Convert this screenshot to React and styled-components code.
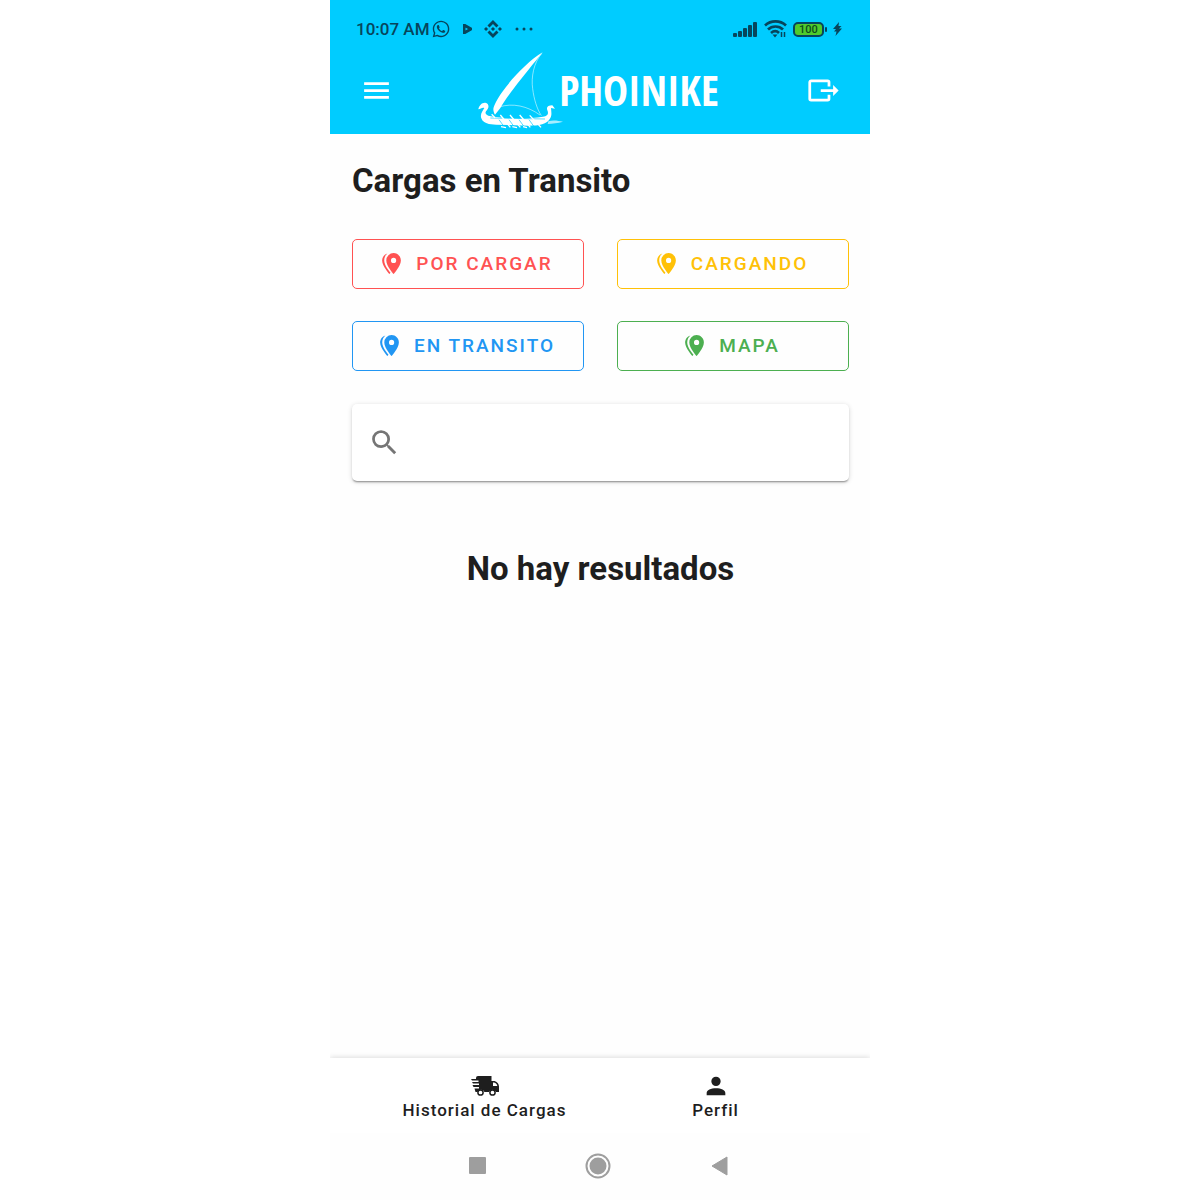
import React from "react";
import styled, { createGlobalStyle } from "styled-components";

const GlobalStyle = createGlobalStyle`
  *, *::before, *::after { box-sizing: border-box; }
  body {
    margin: 0;
    background: #ffffff;
    color: #1e1e1e;
    font-family: Roboto, "Liberation Sans", sans-serif;
  }
  button, input { font: inherit; }
`;

const Screen = styled.div`
  display: flex;
  flex-direction: column;
  width: 100%;
  max-width: 540px;
  min-height: 100vh;
  margin: 0 auto;
  background: #fefefe;
`;

const StatusBar = styled.div`
  display: flex;
  align-items: center;
  justify-content: space-between;
  height: 46px;
  padding: 12px 28px 0 26px;
  background: #00ccff;
  color: #07455c;
`;

const StatusGroup = styled.div`
  display: flex;
  align-items: center;
  gap: ${(p) => p.$gap}px;
`;

const Clock = styled.span`
  font-size: 17px;
  line-height: 20px;
  font-weight: 500;
`;

const Battery = styled.span`
  display: flex;
  align-items: center;
  justify-content: center;
  width: 31px;
  height: 15px;
  border: 2px solid #07455c;
  border-radius: 5px;
  background: #4fcb2c;
  color: #0c4a1c;
  font-size: 11px;
  line-height: 11px;
  font-weight: 500;
`;

const BatteryWrap = styled.span`
  display: flex;
  align-items: center;
  gap: 1px;
  &::after {
    content: "";
    width: 2px;
    height: 5px;
    border-radius: 1px;
    background: #07455c;
  }
`;

const AppBar = styled.header`
  display: flex;
  align-items: center;
  justify-content: space-between;
  height: 88px;
  padding: 0 30px;
  background: #00ccff;
  color: #ffffff;
`;

const IconButton = styled.button`
  display: flex;
  padding: 0;
  border: 0;
  background: none;
  color: inherit;
  cursor: pointer;
`;

const Brand = styled.a`
  display: flex;
  align-items: center;
  padding-right: 4px;
  color: inherit;
  text-decoration: none;
`;

const BrandName = styled.span`
  font-family: "Noto Sans Condensed", "Open Sans Condensed", "Open Sans", sans-serif;
  font-size: 42px;
  line-height: 48px;
  font-weight: 700;
`;

const Ship = styled.svg`
  width: 82px;
  height: 78px;
  overflow: visible;
`;

const Content = styled.main`
  flex: 1;
  display: flex;
  flex-direction: column;
  padding: 25px 21px 0 22px;
`;

const Title = styled.h1`
  margin: 0;
  font-size: 33px;
  line-height: 44px;
  font-weight: 700;
  text-align: ${(p) => (p.$center ? "center" : "left")};
`;

const Filters = styled.div`
  display: grid;
  grid-template-columns: 1fr 1fr;
  gap: 32px 33px;
  margin: 36px 0 33px;
`;

const FilterButton = styled.button`
  display: flex;
  align-items: center;
  justify-content: center;
  gap: 12px;
  height: 50px;
  padding: 0 4px 1px 0;
  border: 1px solid currentColor;
  border-radius: 5px;
  background: transparent;
  color: ${(p) => p.$color};
  font-size: 19px;
  line-height: 24px;
  font-weight: 500;
  letter-spacing: 2px;
  cursor: pointer;
`;

const SearchBox = styled.label`
  display: flex;
  align-items: center;
  gap: 12px;
  height: 77px;
  margin-bottom: 66px;
  padding: 0 16px;
  border-radius: 5px;
  background: #ffffff;
  color: #757575;
  box-shadow: 0 2px 2px -1px rgba(0, 0, 0, 0.4), 0 1px 5px rgba(0, 0, 0, 0.16);
`;

const SearchInput = styled.input`
  flex: 1;
  min-width: 0;
  height: 44px;
  padding: 0;
  border: 0;
  outline: none;
  background: transparent;
  color: #1e1e1e;
  font-size: 22px;
`;

const BottomNav = styled.nav`
  display: flex;
  justify-content: center;
  height: 75px;
  background: #ffffff;
  box-shadow: 0 -1px 5px rgba(0, 0, 0, 0.13);
  clip-path: inset(-8px 0 0 0);
`;

const NavLink = styled.a`
  flex: 0 1 231px;
  display: flex;
  flex-direction: column;
  align-items: center;
  justify-content: center;
  padding-top: 2px;
  color: #1e1e1e;
  font-size: 17px;
  line-height: 21px;
  font-weight: 500;
  letter-spacing: 1px;
  text-decoration: none;
`;

const SystemNav = styled.div`
  display: grid;
  grid-template-columns: repeat(3, 121px);
  justify-content: center;
  justify-items: center;
  align-items: center;
  height: 67px;
  padding: 0 4px 2px 0;
  color: #9e9e9e;
`;

function Icon({ size = 24, d, children }) {
  return (
    <svg width={size} height={size} viewBox="0 0 24 24" fill="currentColor" aria-hidden="true">
      {d ? <path d={d} /> : children}
    </svg>
  );
}

const paths = {
  menu: "M3 6h18v2H3V6m0 5h18v2H3v-2m0 5h18v2H3v-2z",
  exit: "M23,12L19,8V11H10V13H19V16M1,18V6C1,4.89 1.9,4 3,4H15A2,2 0 0,1 17,6V9H15V6H3V18H15V15H17V18A2,2 0 0,1 15,20H3A2,2 0 0,1 1,18Z",
  markers:
    "M14,11.5A2.5,2.5 0 0,0 16.5,9A2.5,2.5 0 0,0 14,6.5A2.5,2.5 0 0,0 11.5,9A2.5,2.5 0 0,0 14,11.5M14,2C17.86,2 21,5.13 21,9C21,14.25 14,22 14,22C14,22 7,14.25 7,9A7,7 0 0,1 14,2M5,9C5,13.5 10.08,19.66 11,20.81L10,22C10,22 3,14.25 3,9C3,5.83 5.11,3.15 8,2.29C6.16,3.94 5,6.33 5,9Z",
  search:
    "M9.5,3A6.5,6.5 0 0,1 16,9.5C16,11.11 15.41,12.59 14.44,13.73L14.71,14H15.5L20.5,19L19,20.5L14,15.5V14.71L13.73,14.44C12.59,15.41 11.11,16 9.5,16A6.5,6.5 0 0,1 3,9.5A6.5,6.5 0 0,1 9.5,3M9.5,5C7,5 5,7 5,9.5C5,12 7,14 9.5,14C12,14 14,12 14,9.5C14,7 12,5 9.5,5Z",
  person:
    "M12,4A4,4 0 0,1 16,8A4,4 0 0,1 12,12A4,4 0 0,1 8,8A4,4 0 0,1 12,4M12,14C16.42,14 20,15.79 20,18V20H4V18C4,15.79 7.58,14 12,14Z",
  whatsapp:
    "M12.04 2C6.58 2 2.13 6.45 2.13 11.91C2.13 13.66 2.59 15.36 3.45 16.86L2.05 22L7.3 20.62C8.75 21.41 10.38 21.83 12.04 21.83C17.5 21.83 21.95 17.38 21.95 11.92C21.95 9.27 20.92 6.78 19.05 4.91C17.18 3.03 14.69 2 12.04 2M12.05 3.67C14.25 3.67 16.31 4.53 17.87 6.09C19.42 7.65 20.28 9.72 20.28 11.92C20.28 16.46 16.58 20.15 12.04 20.15C10.56 20.15 9.11 19.76 7.85 19L7.55 18.83L4.43 19.65L5.26 16.61L5.06 16.29C4.24 15 3.8 13.47 3.8 11.91C3.81 7.37 7.5 3.67 12.05 3.67M8.53 7.33C8.37 7.33 8.1 7.39 7.87 7.64C7.65 7.89 7 8.5 7 9.71C7 10.93 7.89 12.1 8 12.27C8.14 12.44 9.76 14.94 12.25 16C12.84 16.27 13.3 16.42 13.66 16.53C14.25 16.72 14.79 16.69 15.22 16.63C15.7 16.56 16.68 16.03 16.89 15.45C17.1 14.87 17.1 14.38 17.04 14.27C16.97 14.17 16.81 14.11 16.56 14C16.31 13.86 15.09 13.26 14.87 13.18C14.64 13.1 14.5 13.06 14.31 13.3C14.15 13.55 13.67 14.11 13.53 14.27C13.38 14.44 13.24 14.46 13 14.34C12.74 14.21 11.94 13.95 11 13.11C10.26 12.45 9.77 11.64 9.62 11.39C9.5 11.15 9.61 11 9.73 10.89C9.84 10.78 10 10.6 10.1 10.45C10.23 10.31 10.27 10.2 10.35 10.04C10.43 9.87 10.39 9.73 10.33 9.61C10.27 9.5 9.77 8.26 9.56 7.77C9.36 7.29 9.16 7.35 9 7.34C8.86 7.34 8.7 7.33 8.53 7.33Z",
  diamonds:
    "M16.624 13.92l2.718 2.716-7.353 7.353-7.353-7.352 2.717-2.717 4.636 4.66 4.635-4.66zm4.637-4.636L24 12l-2.715 2.716L18.568 12l2.693-2.716zm-9.272 0l2.716 2.692-2.717 2.717L9.272 12l2.716-2.715zm-9.273 0L5.41 12l-2.692 2.692L0 12l2.716-2.716zM11.99.01l7.352 7.33-2.717 2.715-4.636-4.636-4.635 4.66-2.717-2.716L11.989.011z",
};

function ShipLogo() {
  return (
    <Ship viewBox="18 10 246 234" aria-hidden="true" fill="#ffffff">
      <path d="M215 14 C173 39 123 91 92 135 C81 151 68 173 67 184 C67 190 69 197 72 201 L88 181 C96 166 113 142 131 119 C156 86 189 46 215 14Z" />
      <path
        d="M212 18 C188 45 180 89 185 123 C189 155 198 184 211 204 M84 178 C125 165 169 175 207 202"
        fill="none"
        stroke="#ffffff"
        strokeWidth="2"
        opacity="0.8"
      />
      <path d="M22 185 C24 173 33 164 43 165 C54 167 55 179 48 187 C41 194 42 200 52 204 C103 214 171 215 216 207 C232 204 233 197 229 188 C225 177 232 173 244 173 L252 183 L240 181 C241 194 243 202 238 211 C228 231 204 234 173 234 L76 231 C54 231 37 226 32 214 C25 201 35 190 40 181 C33 178 29 185 22 185Z" />
      <path d="M232 221 C248 216 262 220 276 222 C260 226 246 228 230 229Z" opacity="0.65" />
      <path
        d="M58 211 L222 214"
        fill="none"
        stroke="#00ccff"
        strokeWidth="2"
      />
      <path
        d="M84 216 L100 238 M114 216 L130 238 M144 216 L160 238 M174 216 L190 238"
        fill="none"
        stroke="#00ccff"
        strokeWidth="2"
      />
      <path
        d="M62 200 L72 210 M88 202 L118 239 M117 202 L148 239 M146 202 L178 239 M176 203 L210 239 M90 237 L105 240 M124 237 L138 240 M156 237 L168 240"
        fill="none"
        stroke="#ffffff"
        strokeWidth="4"
      />
    </Ship>
  );
}

function TruckIcon() {
  return (
    <svg width="28" height="28" viewBox="0 -4 28 28" fill="currentColor" aria-hidden="true">
      <path d="M5 2q0-2 2-2h13.500v5h2c3 0 5.500 2.500 5.500 5.500V16h-3a3.800 3.800 0 0 0-7 0h-4.500a3.800 3.800 0 0 0-7 0H4.500l-1-3.500H8V11H2.500L1.500 9H8V7.500H2L1 6h6.500V4.500H1L0 3h5z" />
      <path d="M22 6.500h.5c2 0 3.400 1.300 3.800 3.500H22z" fill="#ffffff" />
      <circle cx="9.500" cy="16.500" r="2.600" fill="#ffffff" stroke="currentColor" strokeWidth="1.500" />
      <circle cx="21.500" cy="16.500" r="2.600" fill="#ffffff" stroke="currentColor" strokeWidth="1.500" />
    </svg>
  );
}

function SignalIcon() {
  return (
    <svg width="25" height="16" viewBox="0 0 25 16" fill="currentColor" aria-hidden="true">
      <rect x="0" y="12" width="4" height="4" rx="1" />
      <rect x="5" y="10" width="4" height="6" rx="1" />
      <rect x="10" y="7" width="4" height="9" rx="1" />
      <rect x="15" y="4" width="4" height="12" rx="1" />
      <rect x="20" y="1" width="4" height="15" rx="1" />
    </svg>
  );
}

function WifiIcon() {
  return (
    <svg width="23" height="18" viewBox="0 0 23 18" fill="none" stroke="currentColor" strokeWidth="2.700" aria-hidden="true">
      <path d="M1 5.500C7 0 16 0 22 5.500M4 9.500c4-4 11-4 15 0M7 13c3-2.500 5.500-2.500 8 0" />
      <path d="M8.500 14.500h5L11 17.500z" fill="currentColor" stroke="none" />
      <path d="M17.500 12v5M20.500 12v5" strokeWidth="1.500" />
    </svg>
  );
}

const filters = [
  { label: "POR CARGAR", color: "#ff5252" },
  { label: "CARGANDO", color: "#ffc107" },
  { label: "EN TRANSITO", color: "#2196f3" },
  { label: "MAPA", color: "#4caf50" },
];

export default function App() {
  return (
    <>
      <GlobalStyle />
      <Screen>
        <StatusBar>
          <StatusGroup $gap={12}>
            <StatusGroup $gap={1}>
              <Clock>10:07 AM</Clock>
              <Icon size={20} d={paths.whatsapp} />
            </StatusGroup>
            <svg width="9" height="10" viewBox="0 0 9 10" aria-hidden="true">
              <path d="M1 1L8 5L1 9Z" fill="none" stroke="currentColor" strokeWidth="3" strokeLinejoin="round" />
            </svg>
            <Icon size={18} d={paths.diamonds} />
            <svg width="20" height="4" viewBox="0 0 20 4" fill="currentColor" aria-hidden="true">
              <circle cx="3" cy="2" r="1.500" />
              <circle cx="10" cy="2" r="1.500" />
              <circle cx="17" cy="2" r="1.500" />
            </svg>
          </StatusGroup>
          <StatusGroup $gap={6}>
            <SignalIcon />
            <WifiIcon />
            <BatteryWrap>
              <Battery>100</Battery>
            </BatteryWrap>
            <svg width="9" height="14" viewBox="0 0 9 14" fill="currentColor" aria-hidden="true">
              <path d="M6 0L0 7h3L1 9.500h2.500L2.500 14L9 6.500H6L8.500 4H5.500z" />
            </svg>
          </StatusGroup>
        </StatusBar>

        <AppBar>
          <IconButton type="button" aria-label="Menú">
            <Icon size={33} d={paths.menu} />
          </IconButton>
          <Brand href="#inicio">
            <ShipLogo />
            <BrandName>PHOINIKE</BrandName>
          </Brand>
          <IconButton type="button" aria-label="Salir">
            <Icon size={33} d={paths.exit} />
          </IconButton>
        </AppBar>

        <Content>
          <Title>Cargas en Transito</Title>
          <Filters>
            {filters.map((f) => (
              <FilterButton key={f.label} type="button" $color={f.color}>
                <Icon size={25} d={paths.markers} />
                {f.label}
              </FilterButton>
            ))}
          </Filters>
          <SearchBox>
            <Icon size={33} d={paths.search} />
            <SearchInput type="text" aria-label="Buscar" />
          </SearchBox>
          <Title as="h2" $center>
            No hay resultados
          </Title>
        </Content>

        <BottomNav>
          <NavLink href="#historial">
            <TruckIcon />
            Historial de Cargas
          </NavLink>
          <NavLink href="#perfil">
            <Icon size={28} d={paths.person} />
            Perfil
          </NavLink>
        </BottomNav>

        <SystemNav>
          <IconButton type="button" aria-label="Recientes">
            <svg width="17" height="17" viewBox="0 0 17 17" aria-hidden="true">
              <rect width="17" height="17" rx="1" fill="currentColor" />
            </svg>
          </IconButton>
          <IconButton type="button" aria-label="Inicio">
            <svg width="26" height="26" viewBox="0 0 26 26" aria-hidden="true">
              <circle cx="13" cy="13" r="11.500" fill="none" stroke="currentColor" strokeWidth="2" />
              <circle cx="13" cy="13" r="8.500" fill="currentColor" />
            </svg>
          </IconButton>
          <IconButton type="button" aria-label="Atrás">
            <svg width="17" height="20" viewBox="0 0 17 20" aria-hidden="true">
              <path d="M16 1V19L1 10Z" fill="currentColor" stroke="currentColor" strokeLinejoin="round" />
            </svg>
          </IconButton>
        </SystemNav>
      </Screen>
    </>
  );
}
